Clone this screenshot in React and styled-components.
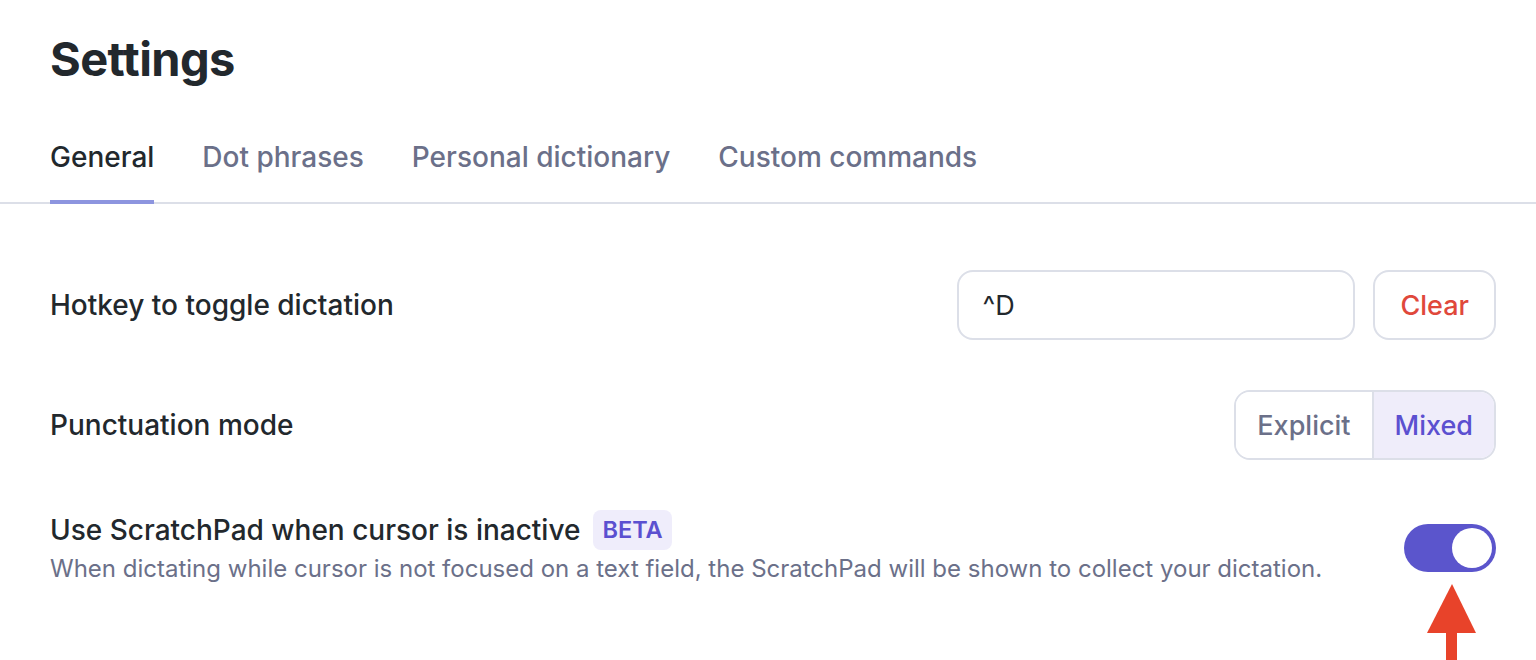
import React, { useState } from "react";
import styled, { createGlobalStyle } from "styled-components";

const GlobalStyle = createGlobalStyle`
  html, body { margin: 0; padding: 0; background: #ffffff; }
  body { font-family: Inter, "Noto Sans", sans-serif; color: #22282d; }
  * { box-sizing: border-box; }
`;

const Page = styled.div`
  width: 1536px;
  height: 660px;
  overflow: hidden;
  position: relative;
  background: #fff;
`;

const Header = styled.div`
  padding: 26px 40px 0 50px;
`;

const Title = styled.h1`
  margin: 0;
  font-size: 47px;
  line-height: 66px;
  font-weight: 700;
  letter-spacing: -0.6px;
  color: #22282d;
`;

const TabBar = styled.div`
  display: flex;
  gap: 48px;
  padding: 0 50px;
  margin-top: 22px;
  border-bottom: 2px solid #dcdfe8;
`;

const Tab = styled.button`
  all: unset;
  box-sizing: border-box;
  cursor: pointer;
  font-family: Inter, sans-serif;
  font-size: 28px;
  font-weight: 500;
  line-height: 40px;
  padding: 23px 0 25px;
  color: ${(p) => (p.$active ? "#22282d" : "#6b7089")};
  position: relative;
  &::after {
    content: "";
    position: absolute;
    left: 0;
    right: 0;
    bottom: -2px;
    height: 4px;
    background: ${(p) => (p.$active ? "#8d95df" : "transparent")};
  }
`;

const Content = styled.div`
  padding: 66px 40px 0 50px;
  display: flex;
  flex-direction: column;
  gap: 50px;
`;

const Row = styled.div`
  display: flex;
  align-items: center;
  justify-content: space-between;
  min-height: 70px;
`;

const LabelBlock = styled.div`
  display: flex;
  flex-direction: column;
  gap: 2px;
`;

const Label = styled.div`
  display: flex;
  align-items: center;
  gap: 13px;
  font-size: 28px;
  font-weight: 500;
  line-height: 40px;
  color: #22282d;
`;

const Description = styled.div`
  font-size: 24px;
  line-height: 34px;
  color: #6b7089;
`;

const Badge = styled.span`
  display: inline-flex;
  align-items: center;
  height: 40px;
  padding: 0 9px;
  border-radius: 8px;
  background: #efedfb;
  color: #5b50d0;
  font-weight: 600;
  font-size: 23.5px;
`;

const Controls = styled.div`
  display: flex;
  gap: 18px;
`;

const HotkeyInput = styled.div`
  width: 398px;
  height: 70px;
  border: 2px solid #dcdfe8;
  border-radius: 16px;
  display: flex;
  align-items: center;
  padding: 0 23px;
  font-size: 27px;
  color: #22282d;
`;

const OutlineButton = styled.button`
  all: unset;
  box-sizing: border-box;
  cursor: pointer;
  height: 70px;
  padding: 0 25px;
  border: 2px solid #dcdfe8;
  border-radius: 16px;
  display: flex;
  align-items: center;
  font-family: Inter, sans-serif;
  font-size: 27px;
  font-weight: 500;
  color: ${(p) => p.$color || "#22282d"};
`;

const Segmented = styled.div`
  display: flex;
  height: 70px;
  border: 2px solid #dcdfe8;
  border-radius: 16px;
  overflow: hidden;
`;

const Segment = styled.button`
  all: unset;
  box-sizing: border-box;
  cursor: pointer;
  display: flex;
  align-items: center;
  padding: 0 ${(p) => p.$px}px;
  font-family: Inter, sans-serif;
  font-size: 27px;
  font-weight: 500;
  color: ${(p) => (p.$active ? "#5b50d0" : "#6b7089")};
  background: ${(p) => (p.$active ? "#efedfa" : "#fff")};
  & + & {
    border-left: 2px solid #dcdfe8;
  }
`;

const ToggleTrack = styled.button`
  all: unset;
  box-sizing: border-box;
  cursor: pointer;
  width: 92px;
  height: 48px;
  border-radius: 24px;
  background: ${(p) => (p.$on ? "#5b55cc" : "#d5d8e2")};
  display: flex;
  align-items: center;
  padding: 4px;
  justify-content: ${(p) => (p.$on ? "flex-end" : "flex-start")};
  flex-shrink: 0;
`;

const ToggleKnob = styled.span`
  width: 40px;
  height: 40px;
  border-radius: 50%;
  background: #fff;
`;

const ArrowMark = styled.svg`
  position: absolute;
  left: 1426px;
  top: 583px;
`;

export default function App() {
  const [tab, setTab] = useState("General");
  const [mode, setMode] = useState("Mixed");
  const [scratch, setScratch] = useState(true);
  const tabs = ["General", "Dot phrases", "Personal dictionary", "Custom commands"];

  return (
    <Page>
      <GlobalStyle />
      <Header>
        <Title>Settings</Title>
      </Header>
      <TabBar>
        {tabs.map((t) => (
          <Tab key={t} $active={t === tab} onClick={() => setTab(t)}>
            {t}
          </Tab>
        ))}
      </TabBar>
      <Content>
        <Row>
          <Label>Hotkey to toggle dictation</Label>
          <Controls>
            <HotkeyInput>^D</HotkeyInput>
            <OutlineButton $color="#e0483b">Clear</OutlineButton>
          </Controls>
        </Row>
        <Row>
          <Label>Punctuation mode</Label>
          <Segmented>
            {["Explicit", "Mixed"].map((m) => (
              <Segment key={m} $px={21} $active={m === mode} onClick={() => setMode(m)}>
                {m}
              </Segment>
            ))}
          </Segmented>
        </Row>
        <Row>
          <LabelBlock>
            <Label>
              Use ScratchPad when cursor is inactive <Badge>BETA</Badge>
            </Label>
            <Description>
              When dictating while cursor is not focused on a text field, the ScratchPad will be shown to collect your dictation.
            </Description>
          </LabelBlock>
          <ToggleTrack $on={scratch} onClick={() => setScratch(!scratch)}>
            <ToggleKnob />
          </ToggleTrack>
        </Row>
      </Content>
      <ArrowMark width="52" height="80" viewBox="0 0 52 80">
        <polygon points="26,1 1,50 50,50" fill="#e8432a" />
        <rect x="20" y="49" width="11" height="31" fill="#e8432a" />
      </ArrowMark>
    </Page>
  );
}
